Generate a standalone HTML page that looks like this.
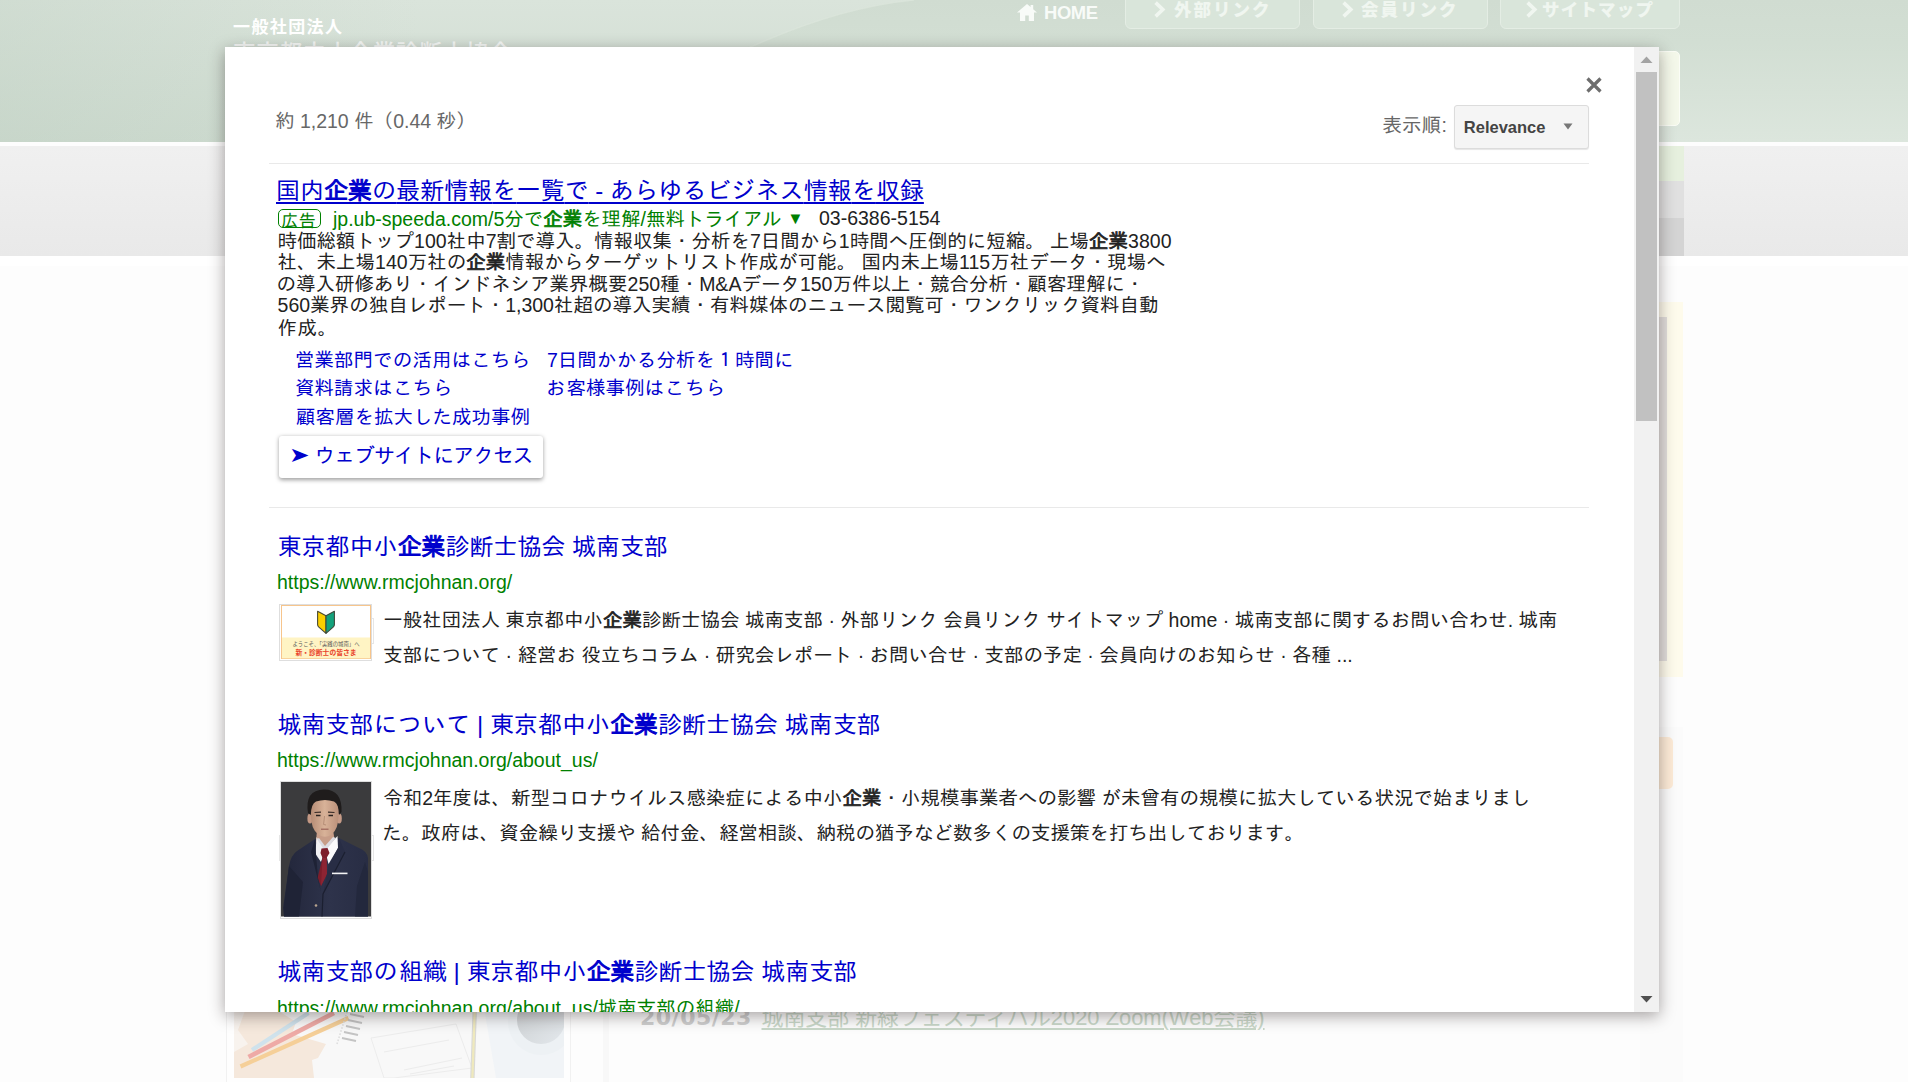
<!DOCTYPE html>
<html lang="ja">
<head>
<meta charset="utf-8">
<title>東京都中小企業診断士協会 城南支部</title>
<style>
html,body{margin:0;padding:0;}
body{width:1908px;height:1082px;overflow:hidden;position:relative;background:#fff;
  font-family:"Liberation Sans","IPAGothic",sans-serif;}
.abs{position:absolute;}
/* ---------- background page ---------- */
#bgpage{position:absolute;left:0;top:0;width:1908px;height:1082px;overflow:hidden;background:#fdfdfd;
  font-family:"Liberation Sans","Noto Sans CJK JP",sans-serif;}
#hdr{left:0;top:0;width:1908px;height:142px;background:#d5e0d6;}
#band{left:0;top:145.5px;width:1908px;height:110.5px;background:linear-gradient(#f0f0f0,#e9e9e9);}
.hl{color:#fff;font-weight:bold;white-space:nowrap;line-height:1;}
.nb{top:-6px;height:32.5px;border:1.5px solid #e4ede4;border-radius:6px;background:#d9e5da;}
.nt{top:0.5px;font-size:17.5px;line-height:18px;font-weight:900;color:#f0f6f0;letter-spacing:2px;white-space:nowrap;}
.chev{font-family:"DejaVu Sans","Liberation Sans",sans-serif;font-size:19px;letter-spacing:0;}
/* ---------- modal ---------- */
#modal{position:absolute;left:225px;top:47px;width:1434px;height:965px;background:#fff;
  box-shadow:0 4px 15px rgba(34,25,25,.4);}
#clip{position:absolute;left:225px;top:47px;width:1409px;height:965px;overflow:hidden;}
#content{position:absolute;left:-225px;top:-47px;width:1908px;height:1082px;color:#222;font-size:19.5px;white-space:nowrap;}
#content .t{position:absolute;white-space:nowrap;line-height:1;color:#222;}
#content b{font-weight:normal;-webkit-text-stroke:0.04em currentColor;}
#content .k{letter-spacing:var(--k,0);}
#content .tri{font-size:16.5px;position:relative;top:-2.2px;}
.hr{position:absolute;left:269px;width:1320px;height:1px;background:#e9e9e9;}
#content .title{font-size:24px;color:#0000cc;}
#content .url{font-size:19.5px;color:#008000;}
#content .snip{font-size:19.5px;color:#222;}
#content .sl{font-size:19.5px;color:#0000cc;}
#adtitle{text-decoration:underline;text-decoration-thickness:2px;text-underline-offset:3px;}
/* scrollbar */
#sb{position:absolute;left:1634px;top:47px;width:25px;height:965px;background:#f1f1f1;}
#sbthumb{position:absolute;left:2px;top:25px;width:21px;height:349px;background:#c1c1c1;}
</style>
</head>
<body>
<div id="bgpage">
  <div id="hdr" class="abs"></div>
  <svg class="abs" style="left:0;top:0" width="1908" height="142" viewBox="0 0 1908 142">
    <defs>
      <linearGradient id="hg" x1="0" y1="0" x2="0" y2="1">
        <stop offset="0" stop-color="#dae4db"/><stop offset="1" stop-color="#cedbd0"/>
      </linearGradient>
      <linearGradient id="hl" x1="0" y1="0" x2="1" y2="0"><stop offset="0" stop-color="#b9cbbc" stop-opacity=".3"/><stop offset="1" stop-color="#b9cbbc" stop-opacity="0"/></linearGradient>
      <linearGradient id="hr" x1="0" y1="0" x2="0" y2="1">
        <stop offset="0" stop-color="#d0dcd1"/><stop offset="0.3" stop-color="#d2ded3"/><stop offset="1" stop-color="#dce6dd"/>
      </linearGradient>
    </defs>
    <rect width="1908" height="142" fill="url(#hg)"/>
    <rect width="420" height="142" fill="url(#hl)"/>
    <path d="M914 0 C862 5 802 23 742 51 L690 80 L690 142 L1908 142 L1908 0 Z" fill="url(#hr)"/>
    <path d="M914 0 C862 5 802 23 742 51" stroke="#dbe5dc" stroke-width="1.5" fill="none" opacity=".7"/>
  </svg>
  <div id="band" class="abs"></div>
  <div class="abs" style="left:0;top:256px;width:1908px;height:10px;background:#fff;"></div>
  <!-- header logo text -->
  <div class="abs hl" style="left:233px;top:19px;font-size:17px;letter-spacing:1.4px;">一般社団法人</div>
  <div class="abs hl" style="left:233px;top:42.5px;font-size:22.5px;letter-spacing:0.8px;font-weight:500;opacity:.8;">東京都中小企業診断士協会</div>
  <!-- nav -->
  <svg class="abs" style="left:1016px;top:3px" width="22" height="18" viewBox="0 0 22 18"><path d="M11 1L1 9.5h3V18h5.2v-5.5h3.6V18H18V9.5h3L17.2 6.2V2h-2.6v2.1z" fill="#f8fbf8"/></svg>
  <div class="abs" style="left:1043.5px;top:3px;font-size:19px;font-weight:bold;color:#f8fbf8;letter-spacing:-0.4px;line-height:19px;transform:scaleX(.97);transform-origin:0 0;">HOME</div>
  <div class="abs nb" style="left:1125px;width:173px;"></div>
  <div class="abs nb" style="left:1312.5px;width:173px;"></div>
  <div class="abs nb" style="left:1499.5px;width:178px;"></div>
  <svg class="abs" style="left:1153.0px;top:0" width="14" height="19" viewBox="0 0 14 19"><path d="M2.6 2.6L9.8 9.5L2.6 16.4" stroke="#f0f6f0" stroke-width="3.6" fill="none"/></svg>
  <div class="abs nt" style="left:1174px;">外部リンク</div>
  <svg class="abs" style="left:1341.0px;top:0" width="14" height="19" viewBox="0 0 14 19"><path d="M2.6 2.6L9.8 9.5L2.6 16.4" stroke="#f0f6f0" stroke-width="3.6" fill="none"/></svg>
  <div class="abs nt" style="left:1361px;">会員リンク</div>
  <svg class="abs" style="left:1524.5px;top:0" width="14" height="19" viewBox="0 0 14 19"><path d="M2.6 2.6L9.8 9.5L2.6 16.4" stroke="#f0f6f0" stroke-width="3.6" fill="none"/></svg>
  <div class="abs nt" style="left:1542px;letter-spacing:1.2px;">サイトマップ</div>
  <!-- right column fragments -->
  <div class="abs" style="left:1640px;top:51px;width:37.5px;height:73px;background:#f4f8ea;border:1px solid #fbfdf6;border-radius:5px;"></div>
  <div class="abs" style="left:1640px;top:146px;width:44px;height:35px;background:#e6f0de;"></div>
  <div class="abs" style="left:1640px;top:181px;width:44px;height:37px;background:#e0e0e0;"></div>
  <div class="abs" style="left:1640px;top:218px;width:44px;height:38px;background:#d4d4d4;"></div>
  <div class="abs" style="left:1640px;top:301.5px;width:43px;height:375px;background:#fefbec;"></div>
  <div class="abs" style="left:1640px;top:317px;width:26.5px;height:344px;background:#e2dedc;"></div>
  <div class="abs" style="left:1640px;top:727px;width:43px;height:355px;background:#fbfbfb;"></div>
  <div class="abs" style="left:1640px;top:737px;width:33px;height:52px;background:#fdebd7;border-radius:5px;"></div>
  <!-- bottom fragments -->
  <div class="abs" style="left:226px;top:1000px;width:343px;height:90px;border:1px solid #f1f1f1;background:#fefefe;"></div>
  <div class="abs" style="left:603px;top:1000px;width:6px;height:90px;background:#f8f8f8;"></div>
  <svg class="abs" style="left:233.5px;top:1000px" width="330" height="78" viewBox="0 0 330 78">
    <defs><linearGradient id="cupg" x1="0" y1="0" x2="1" y2="1"><stop offset="0" stop-color="#c9ccce"/><stop offset="1" stop-color="#e3e8ec"/></linearGradient></defs>
    <rect width="330" height="78" fill="#f8f8f8"/>
    <path d="M0 8 L40 8 L62 22 L58 34 L92 44 L84 58 L78 60 L80 78 L0 78Z" fill="#f5e8dc"/>
    <path d="M0 8 L12 8 L4 30 L14 44 L0 52Z" fill="#f8f3ee"/>
    <path d="M250 8 L330 8 L330 78 L262 78 Z" fill="#f1f4f7"/>
    <circle cx="307" cy="22" r="33" fill="#edf1f4"/>
    <circle cx="307" cy="20" r="24" fill="url(#cupg)"/>
    <path d="M137 38 L222 24 L238 68 L160 78 L150 78Z" fill="none" stroke="#ececec" stroke-width="1"/>
    <path d="M150 52 L215 40 M170 70 L228 58 M176 74 L220 66" stroke="#ececec" stroke-width="1" fill="none"/>
    <path d="M18 50 L74.5 13" stroke="#cfe2ec" stroke-width="4.2" fill="none"/>
    <path d="M14.5 57 L100 13" stroke="#eeaaa6" stroke-width="4.6" fill="none"/>
    <path d="M6.5 66.5 L114.5 18" stroke="#f5cf98" stroke-width="4.2" fill="none"/>
    <path d="M240.8 8 L238.4 78" stroke="#d9d9d6" stroke-width="4.4" fill="none"/>
    <path d="M240.8 8 L238.4 78" stroke="#efe9bd" stroke-width="2.2" fill="none"/>
    <path d="M116 14l14 3M114 20l14 3M112 26l14 3M110 32l14 3M108 38l14 3" stroke="#c4c4c4" stroke-width="2" fill="none"/>
    <path d="M113 12L103 44" stroke="#dedede" stroke-width="1.6" stroke-dasharray="1.6 1.6" fill="none"/>
  </svg>
  <div class="abs" id="bgdate" style="left:640px;top:1005px;font-size:22px;line-height:26px;font-weight:bold;color:#cfcfcf;letter-spacing:0.5px;font-family:'DejaVu Sans','Liberation Sans',sans-serif;">20/05/23</div>
  <div class="abs" id="bglink" style="left:761.5px;top:1004.5px;font-size:21.9px;line-height:26px;color:#c9d8c9;text-decoration:underline;text-decoration-thickness:1.5px;text-underline-offset:3px;white-space:nowrap;">城南支部 新緑フェスティバル2020 Zoom(Web会議)</div>
</div>
<div id="modal"></div>
<div id="clip"><div id="content">
  <div id="relbtn" class="abs" style="left:1454px;top:105px;width:133px;height:42px;border:1px solid #dcdcdc;border-radius:3px;background:#f5f5f5;box-shadow:0 1px 1px rgba(0,0,0,.1);"></div>
  <svg class="abs" style="left:1563px;top:123px" width="10" height="7" viewBox="0 0 10 7"><path d="M0.5 0.5h9L5 6.5z" fill="#777"/></svg>
  <svg class="abs" id="closex" style="left:1585px;top:76px" width="18" height="18" viewBox="0 0 18 18"><path d="M2.5 2.5L15.5 15.5M15.5 2.5L2.5 15.5" stroke="#6e6e6e" stroke-width="3.2" fill="none"/></svg>
  <div class="hr" style="top:163px"></div>
  <div class="abs" id="adbadge" style="left:278px;top:209px;width:41px;height:17px;border:1px solid #008000;border-radius:5px;"></div>
  <div class="abs" id="webbtn" style="left:279px;top:436px;width:264px;height:41.5px;background:#fff;border-radius:3px;box-shadow:0 1.5px 4px rgba(0,0,0,.38);"></div>
  <div class="hr" style="top:507px"></div>
  <div class="abs" id="n1" style="left:278.5px;top:618px;width:93.5px;height:23.5px;border:1px solid #e6e6e6;"></div>
  <div class="abs" id="n2" style="left:278.5px;top:835px;width:93.5px;height:23.5px;border:1px solid #e6e6e6;"></div>
  <div class="abs" id="th1" style="left:279px;top:603.5px;width:91px;height:55px;border:1px solid #dedede;background:#fff;"></div>
  <svg class="abs" id="th1img" style="left:281px;top:605px" width="90" height="54" viewBox="0 0 90 54">
    <rect x="0.5" y="0.5" width="89" height="53" fill="#fff" stroke="#f7c58c"/>
    <rect x="1" y="32.5" width="88" height="20.8" fill="#fff4c4"/>
    <path d="M36.6 6.2 L45 10.8 L45 28.3 L37.6 21.8 Q36.6 20.9 36.6 19.4Z" fill="#fccf00" stroke="#4a4a32" stroke-width="1.1" stroke-linejoin="round"/>
    <path d="M53.4 6.2 L45 10.8 L45 28.3 L52.4 21.8 Q53.4 20.9 53.4 19.4Z" fill="#14a27c" stroke="#3c4a3c" stroke-width="1.1" stroke-linejoin="round"/>
    <text x="45" y="40.6" text-anchor="middle" font-size="5.6" fill="#5a5a5a" font-family="'Liberation Sans','Noto Sans CJK JP',sans-serif" textLength="67" lengthAdjust="spacingAndGlyphs">ようこそ、「実践の城南」へ</text>
    <text x="45" y="49.6" text-anchor="middle" font-size="7" font-weight="bold" fill="#e9432b" font-family="'Liberation Sans','Noto Sans CJK JP',sans-serif" textLength="61" lengthAdjust="spacingAndGlyphs">新・診断士の皆さま</text>
  </svg>
  <div class="abs" id="th2" style="left:279.5px;top:781px;width:90.5px;height:135.5px;border:1px solid #dedede;background:#fff;"></div>
  <svg class="abs" id="th2img" style="left:281px;top:782px" width="90" height="134.5" viewBox="0 0 90 134.5">
    <defs>
      <linearGradient id="sk" x1="0" y1="0" x2="1" y2="0"><stop offset="0" stop-color="#b58b74"/><stop offset=".5" stop-color="#d8b298"/><stop offset="1" stop-color="#ba907a"/></linearGradient>
      <linearGradient id="su" x1="0" y1="0" x2="1" y2="0"><stop offset="0" stop-color="#22263a"/><stop offset=".55" stop-color="#2e334b"/><stop offset="1" stop-color="#282d44"/></linearGradient>
    </defs>
    <rect width="90" height="134.5" fill="#3b3b3d"/>
    <!-- suit -->
    <path d="M34 57 L16 69 Q10 73 8 84 L2 126 L3 134.5 L87 134.5 L87 76 Q86 69 78 66 L58 56 Z" fill="url(#su)"/>
    <path d="M8 84 L3 126 L3 134.5 L18 134.5 L22 100 Z" fill="#1f2336"/>
    <path d="M74 134.5 L76 104 L84 80 L87 90 L87 134.5Z" fill="#23283d"/>
    <!-- neck + collar -->
    <path d="M36 48 L52 48 L54 60 L44 72 L35 60Z" fill="#c79d88"/>
    <path d="M35.5 55 L34.5 72 L40 80 L44 68 Z" fill="#f1f1f3"/>
    <path d="M56.5 54 L57 66 L47.5 82 L44 68 Z" fill="#fafafc"/>
    <path d="M36 57 L44 69 L55 56 L52 55 L44 64 L38 56Z" fill="#dcdce2"/>
    <!-- tie -->
    <path d="M40.5 66.5 L46.5 66 L48.5 71 L45.5 76 L46 92 L40 104 L36.5 96 L41.5 76 L39.5 71Z" fill="#7c1d2b"/>
    <path d="M41.5 76 L45.5 76 L46 92 L40 104Z" fill="#8d2433"/>
    <!-- lapels -->
    <path d="M34 57 L30 70 L40 110 L37 96 L35 72Z" fill="#1e2235"/>
    <path d="M58 56 L64 70 L42 112 L47.5 84 L57 66Z" fill="#282d45"/>
    <path d="M64 70 L42 112 L41 134.5" stroke="#1b1f30" stroke-width="1.2" fill="none"/>
    <!-- pocket square / button -->
    <path d="M51 91.4 L66.5 91.4" stroke="#f4f4f6" stroke-width="1.6"/>
    <circle cx="35" cy="123.5" r="1.3" fill="#b9a58f"/>
    <!-- head -->
    <ellipse cx="29" cy="36.5" rx="2.6" ry="5" fill="#c39884"/>
    <ellipse cx="58.2" cy="36.5" rx="2.6" ry="5" fill="#c79c88"/>
    <path d="M29.5 30 Q29 16 43.5 15.5 Q58 16 57.8 30 L57 40 Q55.5 50 48 54 Q44 55.6 40 54 Q32 50 30.5 40Z" fill="url(#sk)"/>
    <path d="M27 31 Q23.5 8 43 7.5 Q61.5 7.5 60.5 30 L58 33 Q58 22 53 19.5 Q44 16.5 35 19.5 Q30 22 29.8 33Z" fill="#1f1c1c"/>
    <path d="M33.5 30.5 L40 30.2 M47 30.2 L53.5 30.5" stroke="#3a2c28" stroke-width="1.2"/>
    <path d="M35 33.5 L39.5 33.5 M47.5 33.5 L52 33.5" stroke="#2a2220" stroke-width="1.3"/>
    <path d="M43.5 34 L42.6 42.5 L45 43" stroke="#b08872" stroke-width="0.9" fill="none"/>
    <path d="M40 47.2 L47.5 47.2" stroke="#9a6258" stroke-width="1.2"/>
  </svg>
  <div class="t " id="cnt" style="left:275.0px;top:112.0px;color:#676767;">約 1,210 件（0.44 秒）</div>
  <div class="t " id="ordlbl" style="left:1382.4px;top:115.8px;letter-spacing:0.167px;color:#666;">表示順:</div>
  <div class="t " id="reltxt" style="left:1463.8px;top:118.8px;font-size:16.5px;font-weight:bold;color:#444;">Relevance</div>
  <div class="t title" id="adtitle" style="left:276.0px;top:179.2px;--k:0.208px;">国内<b>企業</b><span class="k">の</span>最新情報<span class="k">を</span>一覧<span class="k">で</span> - <span class="k">あらゆるビジネス</span>情報<span class="k">を</span>収録</div>
  <div class="t " id="adbadget" style="left:281.0px;top:212.8px;color:#008000;font-size:17.5px;">広告</div>
  <div class="t url" id="adurl" style="left:333.0px;top:209.8px;--k:-0.143px;">jp.ub-speeda.com/5分<span class="k">で</span><b>企業</b><span class="k">を</span>理解/無料<span class="k">トライアル</span> <span class="tri">▼</span></div>
  <div class="t " id="adtel" style="left:819.0px;top:209.2px;color:#222;">03-6386-5154</div>
  <div class="t " id="body1" style="left:277.6px;top:232.4px;">時価総額トップ100社中7割で導入。情報収集・分析を7日間から1時間へ圧倒的に短縮。 上場<b>企業</b>3800</div>
  <div class="t " id="body2" style="left:277.6px;top:253.2px;">社、未上場140万社の<b>企業</b>情報からターゲットリスト作成が可能。 国内未上場115万社データ・現場へ</div>
  <div class="t " id="body3" style="left:276.6px;top:275.2px;">の導入研修あり・インドネシア業界概要250種・M&amp;Aデータ150万件以上・競合分析・顧客理解に・</div>
  <div class="t " id="body4" style="left:277.6px;top:295.8px;">560業界の独自レポート・1,300社超の導入実績・有料媒体のニュース閲覧可・ワンクリック資料自動</div>
  <div class="t " id="body5" style="left:277.6px;top:319.0px;letter-spacing:0.500px;">作成。</div>
  <div class="t sl" id="sl1" style="left:295.0px;top:351.2px;--k:0.250px;">営業部門<span class="k">での</span>活用<span class="k">はこちら</span></div>
  <div class="t sl" id="sl2" style="left:547.0px;top:351.2px;--k:0.400px;">7日間<span class="k">かかる</span>分析<span class="k">を</span>１時間<span class="k">に</span></div>
  <div class="t sl" id="sl3" style="left:295.0px;top:379.0px;--k:0.375px;">資料請求<span class="k">はこちら</span></div>
  <div class="t sl" id="sl4" style="left:546.0px;top:379.0px;--k:0.900px;"><span class="k">お</span>客様事例<span class="k">はこちら</span></div>
  <div class="t sl" id="sl5" style="left:296.0px;top:407.8px;">顧客層を拡大した成功事例</div>
  <div class="t " id="webarrow" style="left:289.2px;top:443.8px;font-size:21px;color:#0000cc;transform:scaleX(1.17);transform-origin:0 50%;">➤</div>
  <div class="t " id="webbtnt" style="left:314.4px;top:445.0px;--k:-1.182px;font-size:21px;color:#0000cc;"><span class="k">ウェブサイトにアクセス</span></div>
  <div class="t title" id="r1t" style="left:277.4px;top:535.2px;">東京都中小<b>企業</b>診断士協会 城南支部</div>
  <div class="t url" id="r1u" style="left:277.0px;top:573.2px;">https://www.rmcjohnan.org/</div>
  <div class="t snip" id="r1s1" style="left:383.2px;top:611.4px;">一般社団法人 東京都中小<b>企業</b>診断士協会 城南支部 · 外部リンク 会員リンク サイトマップ home · 城南支部に関するお問い合わせ. 城南</div>
  <div class="t snip" id="r1s2" style="left:383.2px;top:646.0px;">支部について · 経営お 役立ちコラム · 研究会レポート · お問い合せ · 支部の予定 · 会員向けのお知らせ · 各種 ...</div>
  <div class="t title" id="r2t" style="left:277.4px;top:713.4px;--k:0.250px;">城南支部<span class="k">について</span> | 東京都中小<b>企業</b>診断士協会 城南支部</div>
  <div class="t url" id="r2u" style="left:277.0px;top:751.2px;">https://www.rmcjohnan.org/about_us/</div>
  <div class="t snip" id="r2s1" style="left:383.2px;top:789.0px;">令和2年度は、新型コロナウイルス感染症による中小<b>企業</b>・小規模事業者への影響 が未曾有の規模に拡大している状況で始まりまし</div>
  <div class="t snip" id="r2s2" style="left:382.2px;top:824.4px;">た。政府は、資金繰り支援や 給付金、経営相談、納税の猶予など数多くの支援策を打ち出しております。</div>
  <div class="t title" id="r3t" style="left:277.4px;top:960.0px;--k:1.500px;">城南支部<span class="k">の</span>組織 | 東京都中小<b>企業</b>診断士協会 城南支部</div>
  <div class="t url" id="r3u" style="left:277.0px;top:999.0px;">https://www.rmcjohnan.org/about_us/城南支部の組織/</div>
</div></div>
<div id="sb">
  <div id="sbthumb"></div>
  <svg class="abs" style="left:6px;top:9px" width="13" height="8" viewBox="0 0 13 8"><path d="M6.5 0.5L12.5 7H0.5z" fill="#a3a3a3"/></svg>
  <svg class="abs" style="left:6px;top:948px" width="13" height="8" viewBox="0 0 13 8"><path d="M6.5 7.5L12.5 1H0.5z" fill="#505050"/></svg>
</div>
</body>
</html>
